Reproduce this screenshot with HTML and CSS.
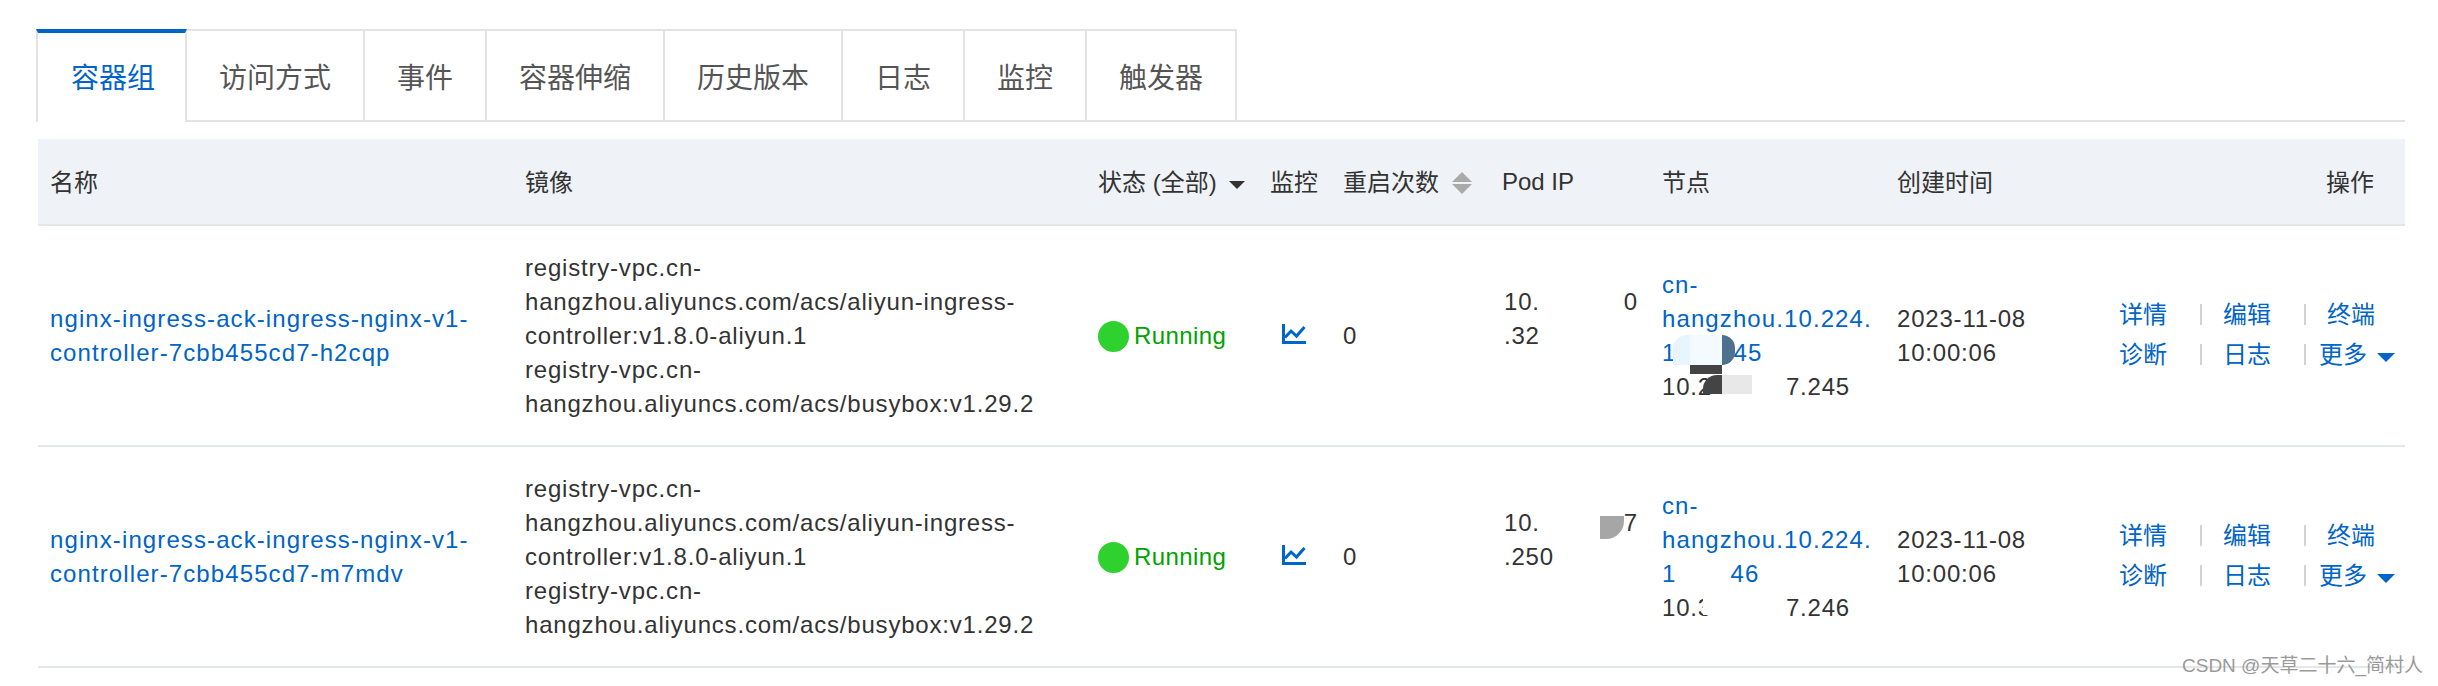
FILE: index.html
```html
<!DOCTYPE html>
<html lang="zh-CN">
<head>
    <meta charset="UTF-8">
    <title>容器组</title>
    <link rel="stylesheet" href="styles.css">
</head>
<body>

<div class="tabs">
    <a class="tab active">容器组</a>
    <a class="tab">访问方式</a>
    <a class="tab">事件</a>
    <a class="tab">容器伸缩</a>
    <a class="tab">历史版本</a>
    <a class="tab">日志</a>
    <a class="tab">监控</a>
    <a class="tab">触发器</a>
</div>

<table class="pods">
    <colgroup>
        <col class="c-name"><col class="c-image"><col class="c-status"><col class="c-monitor"><col class="c-restart">
        <col class="c-ip"><col class="c-node"><col class="c-time"><col class="c-actions">
    </colgroup>
    <thead>
        <tr>
            <th>名称</th>
            <th>镜像</th>
            <th>状态 (全部) <span class="caret-dark"></span></th>
            <th>监控</th>
            <th>重启次数 <span class="sort"><i class="up"></i><i class="down"></i></span></th>
            <th class="th-pod">Pod IP</th>
            <th>节点</th>
            <th>创建时间</th>
            <th class="right">操作</th>
        </tr>
    </thead>
    <tbody>
        <tr>
            <td><a class="link">nginx-ingress-ack-ingress-nginx-v1-controller-7cbb455cd7-h2cqp</a></td>
            <td class="latin">
                <div>registry-vpc.cn-hangzhou.aliyuncs.com/acs/aliyun-ingress-controller:v1.8.0-aliyun.1</div>
                <div>registry-vpc.cn-hangzhou.aliyuncs.com/acs/busybox:v1.29.2</div>
            </td>
            <td><span class="dot"></span><span class="running">Running</span></td>
            <td><svg class="chart" viewBox="0 0 24 20"><path d="M1.5 0v18.500H24" fill="none" stroke="#0064c8" stroke-width="3"/><path d="M3 13.500l6-6.500 5.500 5L22.500 3" fill="none" stroke="#0064c8" stroke-width="3"/></svg></td>
            <td class="latin">0</td>
            <td class="latin ip"><div>10.<span class="gap ip-gap-a"></span>0</div><div>.32</div></td>
            <td class="latin node">
                <a class="link">cn-<br>hangzhou.10.224.<br>1<span class="gap node-gap-a"></span>45</a><br>
                10.2<span class="gap node-gap-b"></span>7.245
                <span class="blot blot-a"></span><span class="blot blot-b"></span><span class="blot blot-c"></span>
                <span class="blot blot-d"></span><span class="blot blot-e"></span><span class="blot blot-f"></span>
            </td>
            <td class="latin">2023-11-08<br>10:00:06</td>
            <td class="actions">
                <div class="action-row"><a class="link">详情</a><span class="sep"></span><a class="link">编辑</a><span class="sep"></span><a class="link">终端</a></div>
                <div class="action-row second"><a class="link">诊断</a><span class="sep"></span><a class="link">日志</a><span class="sep last"></span><a class="link">更多</a><span class="caret-blue"></span></div>
            </td>
        </tr>
        <tr>
            <td><a class="link">nginx-ingress-ack-ingress-nginx-v1-controller-7cbb455cd7-m7mdv</a></td>
            <td class="latin">
                <div>registry-vpc.cn-hangzhou.aliyuncs.com/acs/aliyun-ingress-controller:v1.8.0-aliyun.1</div>
                <div>registry-vpc.cn-hangzhou.aliyuncs.com/acs/busybox:v1.29.2</div>
            </td>
            <td><span class="dot"></span><span class="running">Running</span></td>
            <td><svg class="chart" viewBox="0 0 24 20"><path d="M1.5 0v18.500H24" fill="none" stroke="#0064c8" stroke-width="3"/><path d="M3 13.500l6-6.500 5.500 5L22.500 3" fill="none" stroke="#0064c8" stroke-width="3"/></svg></td>
            <td class="latin">0</td>
            <td class="latin ip"><div>10.<span class="gap ip-gap-b"></span>7</div><div>.250</div><span class="blot blot-g"></span></td>
            <td class="latin node">
                <a class="link">cn-<br>hangzhou.10.224.<br>1<span class="gap node-gap-c"></span>46</a><br>
                10.3<span class="gap node-gap-d"></span>7.246
                <span class="blot blot-h"></span>
            </td>
            <td class="latin">2023-11-08<br>10:00:06</td>
            <td class="actions">
                <div class="action-row"><a class="link">详情</a><span class="sep"></span><a class="link">编辑</a><span class="sep"></span><a class="link">终端</a></div>
                <div class="action-row second"><a class="link">诊断</a><span class="sep"></span><a class="link">日志</a><span class="sep last"></span><a class="link">更多</a><span class="caret-blue"></span></div>
            </td>
        </tr>
    </tbody>
</table>

<div class="watermark">CSDN @天草二十六_简村人</div>

</body>
</html>
```

FILE: styles.css
```css
* { margin: 0; padding: 0; box-sizing: border-box; }
body {
    font-family: "Liberation Sans", "Noto Sans CJK SC", sans-serif;
    font-size: 24px; color: #333; background: #fff;
    padding: 29px 33px 0 38px;
    height: 686px; overflow: hidden; position: relative;
}

/* tabs */
.tabs { display: flex; height: 93px; border-bottom: 2px solid #e3e3e3; }
.tab {
    flex: none; height: 93px; padding: 28px 32px 0 32px;
    font-size: 28px; line-height: 40px; color: #555; white-space: nowrap;
    border: 2px solid #e3e3e3; border-left: 0;
    background: #fff;
}
.tab.active {
    color: #0064c8; border-top: 4px solid #0064c8; padding: 26px 32px 0 33px;
    border-bottom: 0; border-left: 2px solid #e3e3e3; margin-left: -2px;
    width: 151px;
}

/* table */
.pods { width: 2367px; margin-top: 17px; border-collapse: collapse; table-layout: fixed; }
.c-name { width: 475px; }
.c-image { width: 573px; }
.c-status { width: 172px; }
.c-monitor { width: 73px; }
.c-restart { width: 159px; }
.c-ip { width: 160px; }
.c-node { width: 235px; }
.c-time { width: 220px; }
.c-actions { width: 300px; }

th {
    height: 86px; padding: 0 12px 3px 12px; text-align: left;
    font-weight: 400; background: #eff2f7; white-space: nowrap;
    border-bottom: 2px solid #e3e7ec; color: #333;
}
th.right { text-align: right; padding-right: 31px; }
th.th-pod { padding-top: 3px; }
td {
    height: 221px; padding: 0 12px; line-height: 34px;
    border-bottom: 2px solid #e3e7ec; vertical-align: middle;
    position: relative; overflow-wrap: anywhere;
}
.latin { letter-spacing: 0.8px; }
.link { color: #0064c8; letter-spacing: 1.1px; }

.caret-dark {
    display: inline-block; margin-left: 6px; vertical-align: 2px;
    border: 8px solid transparent; border-top-color: #333; border-bottom: 0;
}
.sort { display: inline-block; margin-left: 6px; vertical-align: -3px; }
.sort i { display: block; border: 10px solid transparent; }
.sort .up { border-top: 0; border-bottom-color: #aaa; margin-bottom: 2px; }
.sort .down { border-bottom: 0; border-top-color: #aaa; }

.dot {
    display: inline-block; width: 31px; height: 31px; border-radius: 50%;
    background: #2fd12f; vertical-align: -8px; margin-right: 5px;
}
.running { color: #00a300; letter-spacing: 0.4px; }
.chart { display: block; width: 24px; height: 20px; margin: -4px 0 0 12px; }

.ip { padding: 0 0 34px 14px; white-space: nowrap; }
.gap { display: inline-block; height: 1px; }
.ip-gap-a { width: 84px; }
.ip-gap-b { width: 84px; }
.node-gap-a { width: 57px; }
.node-gap-b { width: 74px; }
.node-gap-c { width: 54px; }
.node-gap-d { width: 74px; }

/* smudges left by the redaction in the source picture */
.blot { position: absolute; }
.blot-a { left: 23px; top: 109px; width: 17px; height: 30px; background: #e8f5fe; border-radius: 14px 0 0 0; }
.blot-b { left: 40px; top: 109px; width: 32px; height: 30px; background: #f3fbff; }
.blot-c { left: 72px; top: 109px; width: 13px; height: 30px; background: #4f7190; border-radius: 0 13px 13px 0; }
.blot-d { left: 40px; top: 139px; width: 32px; height: 9px; background: #444; }
.blot-e { left: 53px; top: 149px; width: 19px; height: 19px; background: #444; border-radius: 14px 0 0 0; }
.blot-f { left: 72px; top: 149px; width: 30px; height: 19px; background: #e8e8e8; }
.blot-g { left: 110px; top: 69px; width: 24px; height: 23px; background: #a6a6a6; border-radius: 0 0 18px 0; }
.blot-h { left: 53px; top: 149px; width: 50px; height: 19px; background: #fff; }

/* actions */
td.actions { padding: 0 0 2px 0; }
.action-row { display: flex; align-items: center; height: 40px; padding-left: 14px; }
.action-row .link { flex: none; letter-spacing: 0; white-space: nowrap; }
.sep { flex: none; width: 2px; height: 21px; background: #d4d4d4; margin: 0 21px 0 33px; }
.sep.last { margin-right: 13px; }
.caret-blue {
    flex: none; margin-left: 10px; margin-top: 6px;
    border: 9px solid transparent; border-top-color: #0064c8; border-bottom: 0;
}

.watermark {
    position: absolute; left: 2182px; top: 654px;
    font-size: 19px; line-height: 24px; color: #9a9a9a; white-space: nowrap;
}
```
